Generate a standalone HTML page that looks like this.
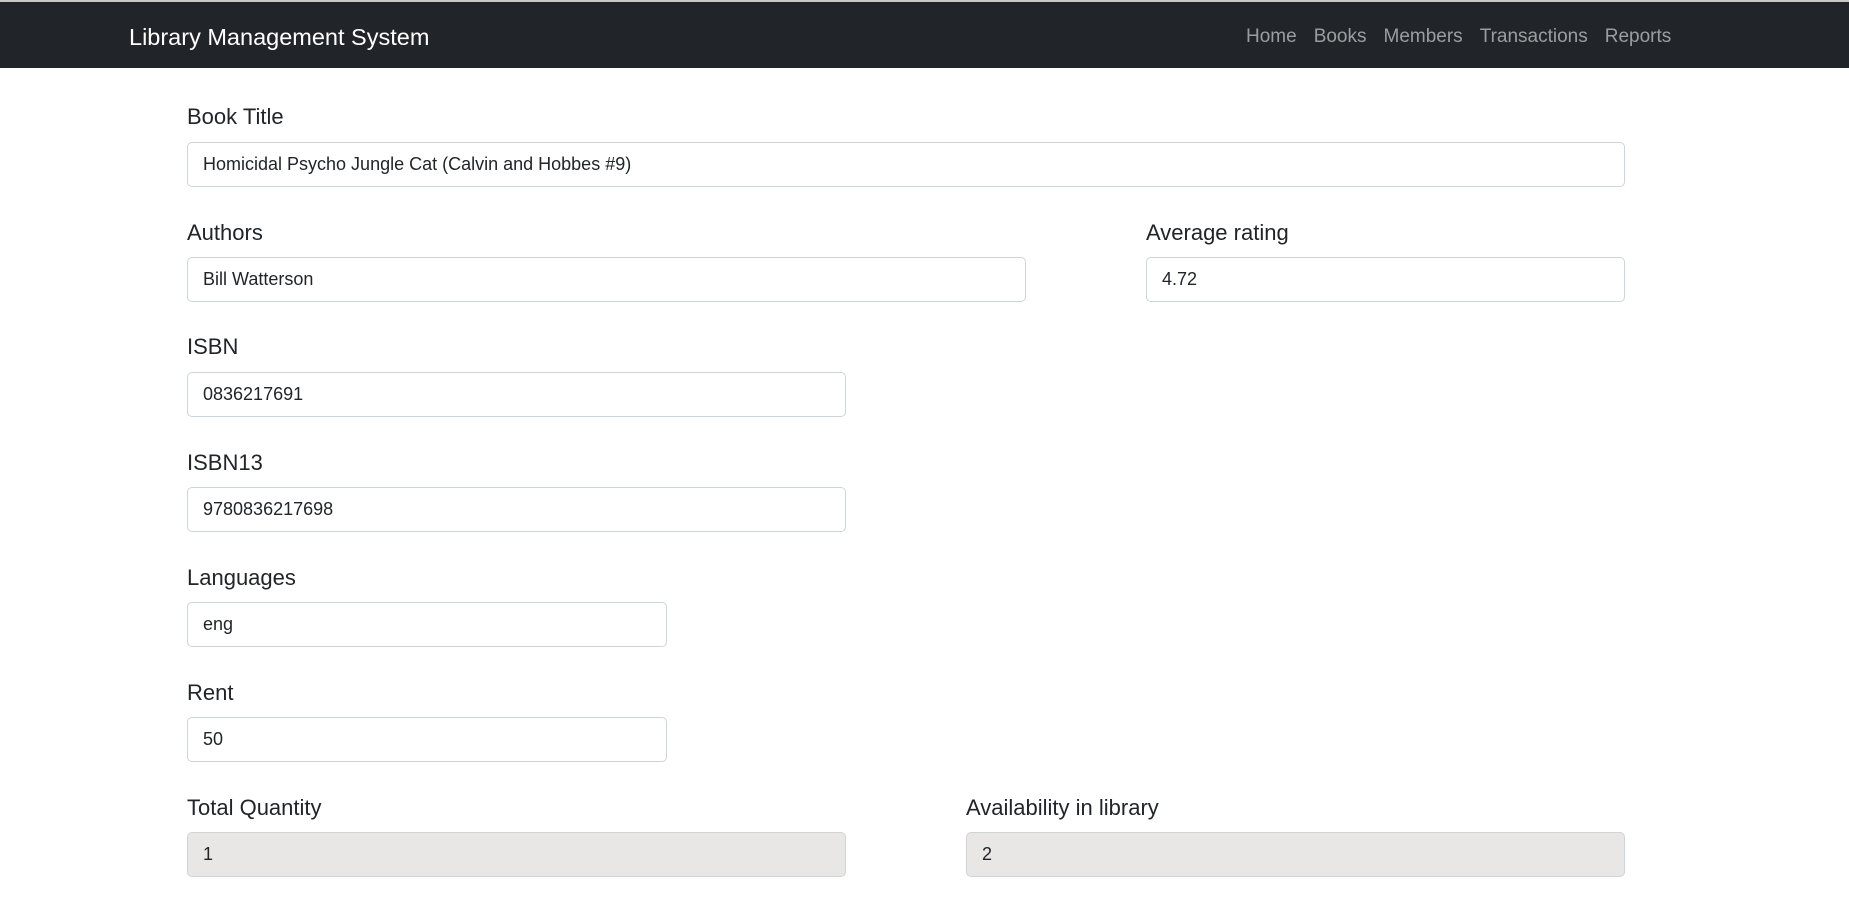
<!DOCTYPE html>
<html><head><meta charset="utf-8"><style>
*{box-sizing:border-box;margin:0;padding:0}
body{width:1849px;height:907px;background:#fff;font-family:"Liberation Sans",Arial,sans-serif;color:#212529;position:relative;overflow:hidden}
.top{position:absolute;left:0;top:0;width:1849px;height:2px;background:#c8c8c8}
.nav{position:absolute;left:0;top:2px;width:1849px;height:66px;background:#212529}
.brand{position:absolute;left:129px;top:22px;color:#fff;font-size:23.5px;line-height:26px}
.links{position:absolute;left:1246px;top:24px;font-size:19px;line-height:22px;color:rgba(255,255,255,.55);white-space:nowrap;word-spacing:0}
.links span{margin-right:17px}
.lbl{position:absolute;font-size:22px;line-height:26px;color:#212529}
.in{position:absolute;height:45px;border:1px solid #ced4da;border-radius:5px;font-size:18px;line-height:43px;padding-left:15px;color:#212529;background:#fff}
.ro{background:#e9e7e6}
</style></head><body>
<div class="top"></div>
<div class="nav"><div class="brand">Library Management System</div>
<div class="links"><span>Home</span><span>Books</span><span>Members</span><span>Transactions</span><span style="margin:0">Reports</span></div></div>

<div class="lbl" style="left:187px;top:104px">Book Title</div>
<div class="in" style="left:187px;top:142px;width:1438px">Homicidal Psycho Jungle Cat (Calvin and Hobbes #9)</div>

<div class="lbl" style="left:187px;top:220px">Authors</div>
<div class="in" style="left:187px;top:257px;width:839px">Bill Watterson</div>
<div class="lbl" style="left:1146px;top:220px">Average rating</div>
<div class="in" style="left:1146px;top:257px;width:479px">4.72</div>

<div class="lbl" style="left:187px;top:334px">ISBN</div>
<div class="in" style="left:187px;top:372px;width:659px">0836217691</div>

<div class="lbl" style="left:187px;top:450px">ISBN13</div>
<div class="in" style="left:187px;top:487px;width:659px">9780836217698</div>

<div class="lbl" style="left:187px;top:565px">Languages</div>
<div class="in" style="left:187px;top:602px;width:480px">eng</div>

<div class="lbl" style="left:187px;top:680px">Rent</div>
<div class="in" style="left:187px;top:717px;width:480px">50</div>

<div class="lbl" style="left:187px;top:795px">Total Quantity</div>
<div class="in ro" style="left:187px;top:832px;width:659px">1</div>
<div class="lbl" style="left:966px;top:795px">Availability in library</div>
<div class="in ro" style="left:966px;top:832px;width:659px">2</div>
</body></html>
